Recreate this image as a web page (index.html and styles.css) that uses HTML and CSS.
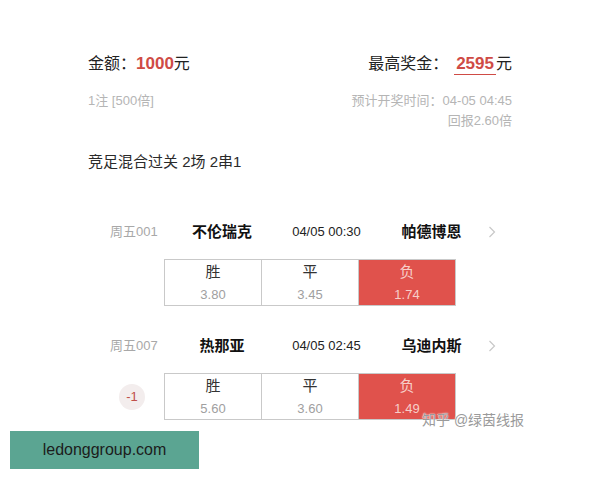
FILE: index.html
```html
<!DOCTYPE html>
<html lang="zh-CN">
    <head>
        <meta charset="UTF-8">
        <meta name="viewport" content="width=device-width, initial-scale=1.0">
        <title>竞足混合过关</title>
        <link rel="stylesheet" href="styles.css">
    </head>
    <body>
        <div class="page">
            <div class="resumo">
                <div class="linha-topo">
                    <div class="valor">金额：<span class="vermelho">1000</span>元</div>
                    <div class="valor">最高奖金：<span class="vermelho sublinhado">2595</span>元</div>
                </div>
                <div class="linha-info">
                    <div>1注 [500倍]</div>
                    <div class="info-direita">
                        <div>预计开奖时间：04-05 04:45</div>
                        <div>回报2.60倍</div>
                    </div>
                </div>
            </div>

            <div class="titulo">竞足混合过关 2场 2串1</div>

            <div class="jogo">
                <div class="jogo-linha">
                    <span class="codigo">周五001</span>
                    <span class="time">不伦瑞克</span>
                    <span class="hora">04/05 00:30</span>
                    <span class="time">帕德博恩</span>
                    <svg class="seta" width="8" height="12" viewBox="0 0 8 12"><polyline points="1.5,1 6.5,6 1.5,11" fill="none" stroke="#c8c8c8" stroke-width="1.2"/></svg>
                </div>
                <div class="odds-linha">
                    <span class="handicap vazio"></span>
                    <div class="odds">
                        <div class="celula"><span class="rotulo">胜</span><span class="numero">3.80</span></div>
                        <div class="celula"><span class="rotulo">平</span><span class="numero">3.45</span></div>
                        <div class="celula ativa"><span class="rotulo">负</span><span class="numero">1.74</span></div>
                    </div>
                </div>
            </div>

            <div class="jogo">
                <div class="jogo-linha">
                    <span class="codigo">周五007</span>
                    <span class="time">热那亚</span>
                    <span class="hora">04/05 02:45</span>
                    <span class="time">乌迪内斯</span>
                    <svg class="seta" width="8" height="12" viewBox="0 0 8 12"><polyline points="1.5,1 6.5,6 1.5,11" fill="none" stroke="#c8c8c8" stroke-width="1.2"/></svg>
                </div>
                <div class="odds-linha">
                    <span class="handicap">-1</span>
                    <div class="odds">
                        <div class="celula"><span class="rotulo">胜</span><span class="numero">5.60</span></div>
                        <div class="celula"><span class="rotulo">平</span><span class="numero">3.60</span></div>
                        <div class="celula ativa"><span class="rotulo">负</span><span class="numero">1.49</span></div>
                    </div>
                </div>
            </div>

            <!-- marcas d'agua por cima da imagem -->
            <div class="marca-zhihu">知乎 @绿茵线报</div>
            <div class="marca-site">ledonggroup.com</div>
        </div>
    </body>
</html>
```

FILE: styles.css
```css
body {
    margin: 0;
    padding: 0;
    background-color: #ffffff;
    font-family: "Liberation Sans", "Noto Sans CJK SC", sans-serif;
    color: #333;
}

.page {
    position: relative;
    width: 600px;
    height: 480px;
    overflow: hidden;
}

.resumo {
    padding: 53px 88px 0 88px;
}

.linha-topo {
    display: flex;
    justify-content: space-between;
    font-size: 16px;
    line-height: 22px;
    color: #222;
}

.vermelho {
    color: #cf4b45;
    font-weight: bold;
    font-size: 17px;
}

.sublinhado {
    display: inline-block;
    margin-left: 6px;
    padding: 0 2px;
    border-bottom: 1px solid #cf4b45;
    line-height: 20px;
}

.linha-info {
    display: flex;
    justify-content: space-between;
    margin-top: 16px;
    font-size: 13px;
    line-height: 20px;
    color: #b5b5b5;
}

.info-direita {
    text-align: right;
}

.titulo {
    margin: 20px 0 0 88px;
    font-size: 15px;
    line-height: 22px;
    color: #2a2a2a;
}

.jogo {
    margin-top: 48px;
}

.jogo + .jogo {
    margin-top: 29px;
}

.jogo-linha {
    display: grid;
    grid-template-columns: 60px 104px 105px 105px 30px;
    align-items: center;
    margin-left: 110px;
    line-height: 22px;
}

.codigo {
    font-size: 13px;
    color: #a8a8a8;
}

.time {
    text-align: center;
    font-size: 15px;
    font-weight: bold;
    color: #111;
}

.hora {
    text-align: center;
    font-size: 13px;
    color: #222;
}

.seta {
    margin-left: 4px;
}

.odds-linha {
    display: flex;
    align-items: center;
    margin: 16px 0 0 119px;
}

.handicap {
    width: 26px;
    height: 26px;
    line-height: 26px;
    border-radius: 50%;
    background-color: #f3eded;
    text-align: center;
    font-size: 13px;
    color: #c0504a;
    margin-right: 19px;
}

.handicap.vazio {
    background-color: transparent;
}

.odds {
    display: flex;
    box-sizing: border-box;
    width: 292px;
    border: 1px solid #c9c9c9;
}

.celula {
    flex: 1;
    display: flex;
    flex-direction: column;
    align-items: center;
    padding-top: 2px;
}

.celula + .celula {
    border-left: 1px solid #c9c9c9;
}

.rotulo {
    font-size: 15px;
    line-height: 20px;
    color: #333;
}

.numero {
    margin-top: 3px;
    font-size: 13px;
    line-height: 20px;
    color: #a0a0a0;
}

.celula.ativa {
    background-color: #e0524c;
}

.celula.ativa .rotulo,
.celula.ativa .numero {
    color: #f7cfc9;
}

.marca-zhihu {
    position: absolute;
    left: 422px;
    top: 410px;
    font-size: 14px;
    line-height: 20px;
    color: #9a9a9a;
    text-shadow: 0 0 2px #fff, 0 0 1px #fff;
}

.marca-site {
    position: absolute;
    left: 10px;
    top: 431px;
    width: 189px;
    height: 38px;
    line-height: 38px;
    background-color: #5ba592;
    color: #1c1c1c;
    font-size: 16px;
    text-align: center;
}
```
